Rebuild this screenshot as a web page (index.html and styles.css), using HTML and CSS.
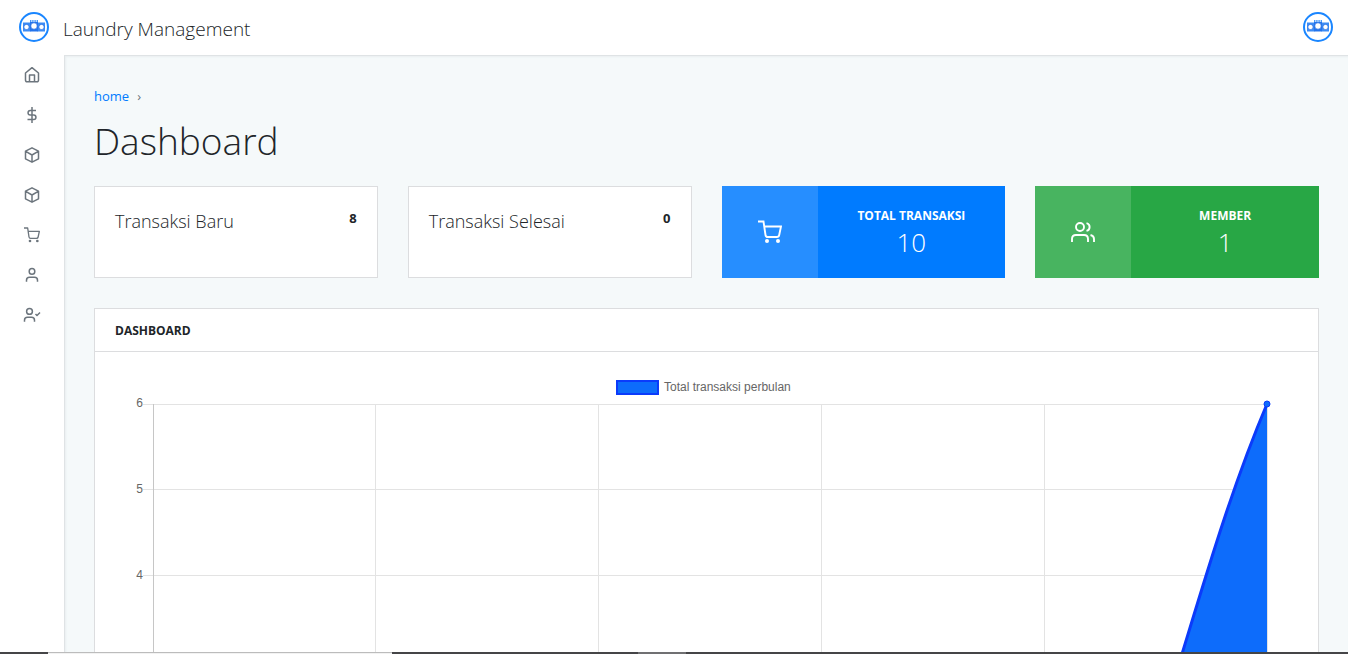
FILE: index.html
```html
<!DOCTYPE html>
<html lang="id">
<head>
<meta charset="utf-8">
<meta name="viewport" content="width=device-width, initial-scale=1">
<title>Laundry Management</title>
<link rel="stylesheet" href="styles.css">
</head>
<body>
<svg class="defs" aria-hidden="true">
  <symbol id="logo" viewBox="0 0 30 30">
    <circle cx="15" cy="15" r="14" fill="#fff" stroke="#1a86ff" stroke-width="2"/>
    <path d="M4 10.500h7.500v9H4zM18.500 10.500H26v9h-7.500z" fill="#3c8cf5"/>
    <path d="M11 10h8v9.500h-8z" fill="#2474ec"/>
    <path d="M11 9h8" stroke="#4a98f8" stroke-width="1.800" stroke-dasharray="1.400 .8"/>
    <circle cx="7.500" cy="15" r="2.600" fill="#fff" stroke="#1b62dc" stroke-width=".6"/>
    <circle cx="22.500" cy="15" r="2.600" fill="#fff" stroke="#1b62dc" stroke-width=".6"/>
    <circle cx="15" cy="14" r="3.200" fill="#fff" stroke="#1b62dc" stroke-width=".6"/>
  </symbol>
  <symbol id="home" viewBox="0 0 18 18"><path d="M2.500 7 9 1.700 15.500 7v7.300a1.500 1.500 0 0 1-1.500 1.500H4a1.500 1.500 0 0 1-1.500-1.500zM6.500 15.500V9h5v6.500"/></symbol>
  <symbol id="dollar" viewBox="0 0 18 18"><path d="M9 1v16M13 4.500H7.300a2.250 2.250 0 0 0 0 4.500h3.400a2.250 2.250 0 0 1 0 4.500H4.500"/></symbol>
  <symbol id="box" viewBox="0 0 18 18"><path d="m9 1.800 6.500 3.400v7.600L9 16.200l-6.500-3.400V5.200zM2.700 5.400 9 9l6.300-3.600M9 9v7"/></symbol>
  <symbol id="cart" viewBox="0 0 24 24"><path d="M0 1.500h5.500L7.500 15q.3 2 2.300 2h9q2 0 2.400-2L23 6.500H6.300"/><circle class="dot" cx="9" cy="21" r="2"/><circle class="dot" cx="20" cy="21" r="2"/></symbol>
  <symbol id="user" viewBox="0 0 18 18"><circle cx="9" cy="5.400" r="2.800"/><path d="M3.500 15.700v-1.500q0-3 3-3h5q3 0 3 3v1.500"/></symbol>
  <symbol id="user-check" viewBox="0 0 18 18"><circle cx="6.500" cy="5.400" r="2.900"/><path d="M1.500 15.700v-1.500q0-3 3-3h4q3 0 3 3v1.500M12.500 8l1.500 1.500 3-3"/></symbol>
  <symbol id="users" viewBox="0 0 24 24"><circle cx="9" cy="7" r="4"/><path d="M1 22v-3q0-4 4-4h8q4 0 4 4v3M15.500 3.100a4 4 0 0 1 0 7.800M23 22v-3q0-3.200-3.500-4"/></symbol>
</svg>

<div class="app">
  <header class="topbar">
    <a class="brand" href="#"><svg class="logo"><use href="#logo"/></svg><span>Laundry Management</span></a>
    <button class="profile" type="button" aria-label="Profil"><svg class="logo"><use href="#logo"/></svg></button>
  </header>
  <nav class="sidebar" aria-label="Menu">
    <a href="#" aria-label="Dashboard"><svg><use href="#home"/></svg></a>
    <a href="#" aria-label="Transaksi"><svg><use href="#dollar"/></svg></a>
    <a href="#" aria-label="Paket"><svg><use href="#box"/></svg></a>
    <a href="#" aria-label="Produk"><svg><use href="#box"/></svg></a>
    <a href="#" aria-label="Pesanan"><svg class="cart-small"><use href="#cart"/></svg></a>
    <a href="#" aria-label="Member"><svg><use href="#user"/></svg></a>
    <a href="#" aria-label="Pengguna"><svg><use href="#user-check"/></svg></a>
  </nav>
  <main class="content">
    <nav class="breadcrumb" aria-label="Breadcrumb"><a href="#">home</a><span>›</span></nav>
    <h1>Dashboard</h1>
    <section class="stats">
      <article class="stat"><h2>Transaksi Baru</h2><strong>8</strong></article>
      <article class="stat"><h2>Transaksi Selesai</h2><strong>0</strong></article>
      <article class="tile blue">
        <div class="tile-icon"><svg><use href="#cart"/></svg></div>
        <div class="tile-text"><h2>Total Transaksi</h2><p>10</p></div>
      </article>
      <article class="tile green">
        <div class="tile-icon"><svg><use href="#users"/></svg></div>
        <div class="tile-text"><h2>Member</h2><p>1</p></div>
      </article>
    </section>
    <section class="panel">
      <h2>Dashboard</h2>
      <div class="panel-body">
        <svg class="chart" viewBox="0 0 1183 591" role="img" aria-label="Total transaksi perbulan">
          <g class="grid">
            <path d="M28 32.500h1125M28 117.500h1125M28 203.500h1125M28 289.500h1125M28 374.500h1125M28 460.500h1125M28 545.500h1125"/>
            <path d="M260.500 32v524M483.500 32v524M706.500 32v524M929.500 32v524M1152.500 32v524"/>
            <path class="axis" d="M38.500 32v524"/>
          </g>
          <path class="area" d="M38 545H929C1000 510 1040 370 1067 282C1092 200 1118 112 1152 32V545z"/>
          <path class="line" d="M38 545H929C1000 510 1040 370 1067 282C1092 200 1118 112 1152 32"/>
          <circle class="point" cx="1152" cy="32" r="3"/>
          <rect class="key" x="502" y="9" width="41" height="13"/>
          <text x="549" y="19">Total transaksi perbulan</text>
          <g class="ticks">
            <text x="28" y="35">6</text><text x="28" y="121">5</text><text x="28" y="207">4</text>
          </g>
        </svg>
      </div>
    </section>
  </main>
</div>
<div class="taskbar" aria-hidden="true"><i class="start"></i><i class="search"></i><i class="apps"></i><i class="active"></i></div>
</body>
</html>
```
FILE: styles.css
```css
* { box-sizing: border-box; }
body {
  margin: 0;
  color: #212529;
  background: #fff;
  font: 14px/20px "Open Sans", "Noto Sans", sans-serif;
}
h1, h2, p { margin: 0; }
a { color: #007bff; text-decoration: none; }
.defs { position: absolute; width: 0; height: 0; }
.app {
  display: grid;
  grid-template: 55px minmax(0, 1fr) / 64px minmax(0, 1fr);
  height: 100vh;
  overflow: hidden;
}
.topbar {
  grid-column: 1 / -1;
  display: flex;
  align-items: flex-start;
  justify-content: space-between;
  padding: 12px 15px 0 19px;
}
.brand {
  display: flex;
  gap: 14px;
  color: #212529;
  font-size: 19px;
  font-weight: 300;
  line-height: 34px;
}
.logo { display: block; width: 30px; height: 30px; }
.profile { padding: 0; border: 0; background: none; }
.sidebar { display: flex; flex-direction: column; }
.sidebar a { display: flex; height: 40px; align-items: center; justify-content: center; }
.sidebar svg {
  width: 18px;
  height: 18px;
  fill: none;
  stroke: #6c757d;
  stroke-width: 1.500;
  stroke-linejoin: round;
}
.sidebar .cart-small { width: 16px; height: 16px; stroke-width: 2; color: #6c757d; }
.dot { fill: currentColor; stroke: none; }
.content {
  padding: 30px 29px;
  border: solid #dfe3e5;
  border-width: 1px 0 0 1px;
  background: #f5f9fa;
  box-shadow: inset 1px 1px 2px #e9eef0;
  overflow: auto;
  scrollbar-width: none;
}
.breadcrumb { display: flex; gap: 8px; font-size: 13px; line-height: 20px; }
.breadcrumb span { color: #6c757d; }
h1 { margin: 9px 0 20px; font-size: 37px; font-weight: 300; line-height: 51px; }
.stats { display: grid; grid-template-columns: repeat(4, minmax(0, 1fr)); gap: 30px; }
.stat {
  display: flex;
  justify-content: space-between;
  min-height: 92px;
  padding: 20px;
  border: 1px solid #dcdddf;
  background: #fff;
}
.stat h2 { font-size: 18px; font-weight: 300; line-height: 28px; }
.stat strong { font-size: 13px; line-height: 22px; }
.tile { display: flex; min-height: 92px; color: #fff; }
.tile-icon {
  display: flex;
  flex: 0 0 96px;
  align-items: center;
  justify-content: center;
  background: rgba(255, 255, 255, .15);
}
.tile-icon svg { width: 24px; height: 24px; fill: none; stroke: #fff; stroke-width: 1.900; }
.tile-text { flex: 1; padding: 20px 0; text-align: center; }
.tile-text h2, .panel h2 { font-size: 12px; font-weight: 700; line-height: 20px; text-transform: uppercase; }
.tile-text p { font-size: 26px; font-weight: 300; line-height: 32px; }
.blue { background: #007bff; }
.green { background: #28a745; }
.panel { margin-top: 30px; border: 1px solid #dcdddf; background: #fff; }
.panel h2 { padding: 12px 20px 10px; border-bottom: 1px solid #dcdddf; }
.panel-body { padding: 20px; }
.chart { display: block; width: 100%; font: 12px "Liberation Sans", Arial, sans-serif; }
.chart text { fill: #666; }
.ticks { text-anchor: end; }
.grid path { fill: none; stroke: #e3e3e3; }
.grid .axis { stroke: #c6c6c6; }
.area { fill: #0d6cfb; }
.line { fill: none; stroke: #0b3bfb; stroke-width: 3; }
.point { fill: #0d6cfb; stroke: #0b3bfb; }
.key { fill: #0d6cfb; stroke: #0b3bfb; stroke-width: 2; }
.taskbar { position: fixed; inset: auto 0 0; display: flex; height: 2px; background: #454547; }
.start { width: 48px; }
.search { width: 344px; border-top: 1px solid #bcbcbc; background: #f2f2f2; }
.apps { width: 246px; }
.active { width: 48px; background: #707072; }
```
